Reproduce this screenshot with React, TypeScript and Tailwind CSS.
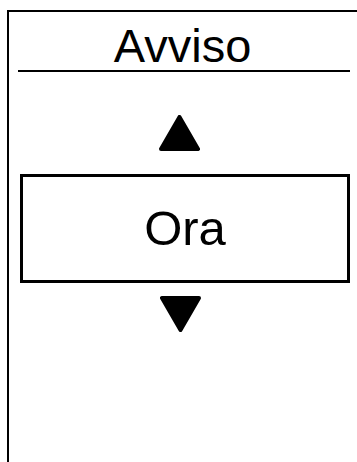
import React from "react";

function Tri({ down = false }: { down?: boolean }) {
  return (
    <svg width="41" height="36" viewBox="0 0 41 36" className="block">
      <polygon
        points={down ? "2,2 39,2 20.5,34" : "20.5,2 39,34 2,34"}
        fill="#000"
        stroke="#000"
        strokeWidth="4"
        strokeLinejoin="round"
      />
    </svg>
  );
}

export default function App() {
  return (
    <div className="w-[357px] h-[462px] overflow-hidden bg-white" style={{ fontFamily: '"Liberation Sans", Arial, sans-serif' }}>
      <div className="ml-[7px] mt-[10px] w-[354px] h-[480px] border-2 border-black flex flex-col items-start">
        <div className="w-full pt-[10px] pr-[3px] text-center text-[47px] leading-[47px] text-black">Avviso</div>
        <div className="mt-[1px] ml-[9px] w-[332px] h-[2px] bg-black" />
        <div className="mt-[43px] ml-[150px]">
          <Tri />
        </div>
        <div className="mt-[23px] ml-[11px] w-[330px] h-[109px] border-[3px] border-black flex items-center justify-center">
          <span className="text-[49px] leading-[49px] text-black">Ora</span>
        </div>
        <div className="mt-[13px] ml-[151px]">
          <Tri down />
        </div>
      </div>
    </div>
  );
}
